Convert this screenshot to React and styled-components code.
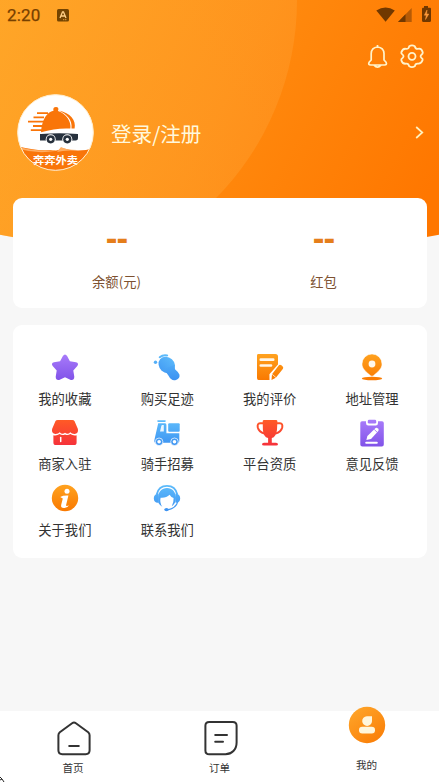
import React from 'react';
import styled, { createGlobalStyle } from 'styled-components';

const GlobalStyle = createGlobalStyle`
  * { box-sizing: border-box; }
  body {
    margin: 0;
    background: #f7f7f7;
    color: #333;
    font-family: "Noto Sans CJK SC", "Noto Sans", sans-serif;
  }
  svg { display: block; overflow: visible; }
`;

const Screen = styled.div`
  position: relative;
  display: flex;
  flex-direction: column;
  width: 439px;
  height: 782px;
  overflow: hidden;
  background: #f7f7f7;
`;

const Backdrop = styled.div`
  position: absolute;
  inset: 0 0 auto;
  height: 260px;
  overflow: hidden;
  background: linear-gradient(118deg, #ff9b18 0%, #ff8a0e 48%, #ff7700 92%);
  clip-path: circle(1147px at 50% -891px);

  &::before {
    content: '';
    position: absolute;
    left: -269px;
    top: -283px;
    width: 566px;
    height: 566px;
    border-radius: 50%;
    background: linear-gradient(90deg, rgba(255, 190, 75, 0.3) 48%, rgba(255, 205, 120, 0.14));
  }
`;

const StatusBar = styled.div`
  position: relative;
  display: flex;
  align-items: center;
  height: 30px;
  padding: 0 7px;
  color: #774000;
`;

const Clock = styled.span`
  width: 50px;
  font: 400 17px/30px Roboto, sans-serif;
  letter-spacing: 0.2px;
  -webkit-text-stroke: 0.25px currentColor;
`;

const StatusIcons = styled.div`
  margin-left: auto;
`;

const Actions = styled.div`
  position: relative;
  display: flex;
  justify-content: flex-end;
  gap: 11px;
  height: 64px;
  padding: 14px 15.5px 0 0;
`;

const Profile = styled.div`
  position: relative;
  display: flex;
  align-items: center;
  height: 77px;
  padding: 0 15px 0 17px;
`;

const LoginText = styled.span`
  margin: 0 0 0 17px;
  flex: 1;
  font-size: 20.6px;
  line-height: 30px;
  color: #fff8dc;
`;

const Card = styled.section`
  position: relative;
  margin: 0 12px 0 13px;
  border-radius: 9px;
  background: #fff;
`;

const BalanceCard = styled(Card)`
  display: grid;
  grid-template-columns: 1fr 1fr;
  height: 110px;
  margin-top: 27px;
`;

const Balance = styled.div`
  display: flex;
  flex-direction: column;
  align-items: center;
  padding-top: 25px;
`;

const Amount = styled.strong`
  height: 49px;
  font: 700 35px/30px "Liberation Sans", sans-serif;
  letter-spacing: -0.8px;
  color: #e57e1b;
`;

const BalanceLabel = styled.span`
  font-size: 13.3px;
  line-height: 20px;
  color: #7d5130;
`;

const MenuCard = styled(Card)`
  display: grid;
  grid-template-columns: repeat(4, 102.4px);
  grid-auto-rows: 65.6px;
  justify-content: start;
  height: 233px;
  margin-top: 17px;
  padding: 29px 0 0 0.7px;
`;

const MenuItem = styled.div`
  display: flex;
  flex-direction: column;
  align-items: center;
`;

const MenuLabel = styled.span`
  margin-top: 6.6px;
  font-size: 13.3px;
  line-height: 20px;
`;

const TabBar = styled.nav`
  position: relative;
  display: grid;
  grid-template-columns: 146px 147px 147px;
  height: 71px;
  margin-top: auto;
  background: #fff;
`;

const Tab = styled.div`
  display: flex;
  flex-direction: column;
  align-items: center;
  margin-top: ${(p) => (p.$raised ? '-5px' : '9px')};
`;

const TabIcon = styled.div`
  padding-left: ${(p) => (p.$raised ? '0' : '2px')};
`;

const TabLabel = styled.span`
  margin-top: ${(p) => (p.$raised ? '13px' : '3px')};
  font-size: 10.6px;
  line-height: 16px;
`;

const CursorMark = styled.div`
  position: absolute;
  left: 0;
  bottom: 0;
`;

const palettes = {
  purple: ['#a87bfa', '#8052e8'],
  blue: ['#5ebcfb', '#3a90f1'],
  orange: ['#ffa21f', '#f97800'],
  red: ['#ff5a26', '#f52f3c'],
};

function MenuIcon({ name, tone, children }) {
  const id = `fill-${name}`;
  return (
    <svg width="28" height="28" viewBox="0 0 28 28" fill={`url(#${id})`}>
      <defs>
        <linearGradient id={id} gradientUnits="userSpaceOnUse" x1="14" y1="0" x2="14" y2="27">
          <stop stopColor={palettes[tone][0]} />
          <stop offset="1" stopColor={palettes[tone][1]} />
        </linearGradient>
      </defs>
      {children(`url(#${id})`)}
    </svg>
  );
}

const menu = [
  { name: 'star', label: '我的收藏', tone: 'purple', draw: () => (
    <path d="M11.9 2Q14 -1 16.1 2L18.9 7.2L25 8.3Q28.3 9.3 26.3 12L22.3 16.4L23.3 22.8Q23.2 26.6 19.8 26L14 23.2L8.2 26Q4.8 26.6 4.7 22.8L5.7 16.4L1.7 12Q-.3 9.2 3 8.3L9.1 7.2Z" />
  ) },
  { name: 'steps', label: '购买足迹', tone: 'blue', draw: (fill) => (
    <>
      <ellipse cx="13.8" cy="11" rx="8.8" ry="7.6" transform="rotate(42 13.8 11)" />
      <path d="M8 16Q12.4 16.6 15.4 21.6Q18.5 27.6 23 26Q27.4 24.2 26.4 20.5Q25 17.5 22.2 15.4Q21 13.5 21 11Z" />
      <circle cx="2.5" cy="8.3" r="1.7" />
      <path d="M6.7 3.2Q10 .5 14.2 1.4" stroke={fill} strokeWidth="2" fill="none" strokeLinecap="round" />
    </>
  ) },
  { name: 'review', label: '我的评价', tone: 'orange', draw: () => (
    <>
      <path d="M2 0H19.5Q22 0 22 2.5V10.5L13.4 20.2L13.5 26H2.5Q1 26 1 24V1.5Q1 0 2 0Z" />
      <path d="M4.8 5.7H17.2M4.8 11.5H15" stroke="#fff6e8" strokeWidth="2.7" strokeLinecap="round" fill="none" />
      <path d="M22.7 11.5Q23.7 10 25.4 11.2L26.7 12.5Q27.8 13.6 26.8 15L19.8 23.8L15.5 26L16 20.2Z" />
      <path d="M16.2 20.3L20 23.6" stroke="#fff6e8" strokeWidth=".8" />
    </>
  ) },
  { name: 'address', label: '地址管理', tone: 'orange', draw: () => (
    <>
      <ellipse cx="14" cy="24.5" rx="10.2" ry="1.8" />
      <path d="M14 0A10 9.9 0 0 0 4 10C4 14.5 8 18 12.3 21.4Q14 23.2 15.7 21.4C20 18 24 14.5 24 10A10 9.9 0 0 0 14 0Z" stroke="#fff" strokeWidth=".5" />
      <circle cx="14" cy="10" r="3.4" fill="#fff8ec" />
    </>
  ) },
  { name: 'shop', label: '商家入驻', tone: 'red', draw: () => (
    <>
      <path d="M4.5 1Q5 0 6.8 0H21.2Q23 0 23.6 1.2L26.9 9Q27.7 13.8 23.6 13.9Q20.7 14 19.3 12.2Q16.8 15 14 12.7Q11.2 15 8.7 12.2Q7.3 14 4.4 13.9Q.3 13.5 1.1 9Z" />
      <path d="M2.4 15.3Q6 16 8.6 14Q11.4 16 14 14.4Q16.8 16 19.3 14Q22 16 25.6 15.3V22.4Q25.6 25 23 25H5Q2.4 25 2.4 22.4Z" />
      <path d="M9.7 17.5V21.4" stroke="#fff" strokeWidth="1.5" strokeLinecap="round" />
    </>
  ) },
  { name: 'rider', label: '骑手招募', tone: 'blue', draw: (fill) => (
    <>
      <rect x="4.2" y=".2" width="8.6" height="1.7" rx=".8" />
      <path d="M5.2 3.2H12.1Q13.4 3.2 13.4 5V13.2H26.3V21.3Q26.3 22.8 24.5 22.8H3Q.7 22.8 1.5 19.4Z" />
      <rect x="15.2" y="3.2" width="11.5" height="8.6" rx="1" />
      <circle cx="6.1" cy="21.8" r="3.8" fill={fill} stroke="#fff" strokeWidth=".7" />
      <circle cx="21.5" cy="21.8" r="3.8" fill={fill} stroke="#fff" strokeWidth=".7" />
      <circle cx="6.1" cy="21.8" r="1.8" fill="#fff" /><circle cx="21.5" cy="21.8" r="1.8" fill="#fff" />
      <path d="M7 11.5L8.3 6Q8.5 5 9.3 5H10.8V11.5Z" fill="#e9f6ff" />
    </>
  ) },
  { name: 'trophy', label: '平台资质', tone: 'red', draw: (fill) => (
    <>
      <path d="M6.7 1Q7 0 8 0H20Q21.3 0 21.4 1.2L21 9.7Q20.2 17 15.8 18V22.7H20Q22 22.8 22 24.2Q22 25.5 20.2 25.5H8Q6 25.5 6 24.2Q6 22.8 8 22.7H12.1V18Q7.2 17 6.9 9.7Z" />
      <path d="M7.6 3.3H4Q1 3.3 1.8 7.5Q2.8 11.8 8.6 13.6M20.4 3.3H24Q27 3.3 26.2 7.5Q25.2 11.8 19.4 13.6" stroke={fill} strokeWidth="2" fill="none" />
    </>
  ) },
  { name: 'feedback', label: '意见反馈', tone: 'purple', draw: () => (
    <>
      <path d="M4 1.3H8V3Q8 5.5 10.2 5.5H17.8Q20 5.5 20 3V1.3H24Q25.8 1.3 25.8 3V24.4Q25.8 26.4 23.8 26.4H4.4Q2.3 26.4 2.3 24.4V3Q2.3 1.3 4 1.3Z" />
      <rect x="9.8" y="-.2" width="8.4" height="3.8" rx="1.3" />
      <path d="M17.6 8.1Q18.6 7.2 20 8.5Q21.3 9.8 20.3 11.1L13 19.1L8.4 20L9.4 16Z" fill="#fff" />
      <path d="M16.2 9.4L19.2 12.3" stroke="#9868f2" strokeWidth=".8" />
      <path d="M8.2 22.7H18.8" stroke="#fff" strokeWidth="2" strokeLinecap="round" />
    </>
  ) },
  { name: 'about', label: '关于我们', tone: 'orange', draw: () => (
    <>
      <circle cx="14" cy="13" r="13.2" />
      <circle cx="16" cy="6.3" r="2.5" fill="#fff" />
      <path d="M9.2 11.9Q12.2 10.2 17.4 10.5L15 20.6Q15.7 21.3 18 20.3Q16.6 23.2 13 23Q9.4 22.9 10.2 19.7L11.8 13.4Z" fill="#fff" />
    </>
  ) },
  { name: 'support', label: '联系我们', tone: 'blue', draw: (fill) => (
    <>
      <path d="M3.7 9.5C5 3.6 9 .9 14 .9S23 3.6 24.3 9.5" stroke={fill} strokeWidth="1.8" fill="none" />
      <path d="M14 2.9C8.8 2.9 5.6 6.6 5.1 11.8L5.3 17.8Q7.2 21 9.3 21.7Q6.4 17.5 7.6 12.7Q13.2 13.2 16.6 9.7Q18.2 12.5 20.6 13Q20.8 17.5 18.8 21.2Q22.7 19 23 12.8C22.6 6.6 19.2 2.9 14 2.9Z" />
      <path d="M5.6 8.5V17.6Q.8 18 .8 13.2Q.8 9.3 5.6 8.5ZM22.4 8.5V17.6Q27.2 18 27.2 13.2Q27.2 9.3 22.4 8.5Z" />
      <path d="M24.8 16.7Q23 23.4 14.5 24.8" stroke={fill} strokeWidth="1.2" fill="none" />
      <ellipse cx="13.5" cy="24.6" rx="2.2" ry="1.6" />
    </>
  ) },
];

const Logo = () => (
  <svg width="77" height="77" viewBox="0 0 77 77">
    <defs><clipPath id="avatar"><circle cx="38.5" cy="38.5" r="38" /></clipPath></defs>
    <circle cx="38.5" cy="38.5" r="38" fill="#fff" />
    <g clipPath="url(#avatar)">
      <path d="M0 52Q17 57 34 56Q40 58 45 54Q61 59 77 54V77H0Z" fill="#f97509" />
      <path d="M0 52Q16 58 39 56L38 57Q20 60 2 55Z" fill="#ffad61" />
      <path d="M40 58L44 53Q49 56 60 56L46 57Z" fill="#ffad61" />
    </g>
    <path d="M24 38.2C25 25 30 18.2 36.5 16.8Q35.5 13 39 13Q42.4 13 41 17C49.5 20 54.4 27.6 53.4 34.5Q39 33.7 24 38.2Z" fill="#f97509" />
    <path d="M42.2 16.6C53 19 59.5 26.5 57.6 34.5H54.5C55.5 26 50 20.8 42.2 16.6Z" fill="#f97509" />
    <path d="M20 19.2H31M16.5 23.4H27M11 27.7H27M16 32H25M13.8 36.2H25" stroke="#f97509" strokeWidth="1.8" />
    <path d="M24 40Q42 38.5 61 40V44.2Q61 46.5 58.7 46.5H23V40Z" fill="#27313d" />
    {[33.7, 50.3].map((x) => (
      <g key={x}>
        <circle cx={x} cy="45.3" r="5" fill="#fff" />
        <circle cx={x} cy="45.3" r="4.1" fill="#27313d" />
        <circle cx={x} cy="45.3" r="1.6" fill="#fff" />
      </g>
    ))}
    <text x="38.5" y="70" textAnchor="middle" fontSize="10" fontWeight="700" fill="#fff" textLength="45" lengthAdjust="spacingAndGlyphs">奔奔外卖</text>
    <circle cx="38.5" cy="38.5" r="37.8" fill="none" stroke="#ffedcd" strokeWidth="1" />
  </svg>
);

const NoticeBadge = () => (
  <svg width="12" height="13" viewBox="0 0 12 13">
    <rect width="12" height="12.6" rx="1.6" fill="#744400" />
    <path d="M3 9L5.5 3H6.5L9 9M4 7H8" fill="none" stroke="#ffcf85" strokeWidth="1.3" />
    <path d="M6 10.7H10" stroke="#ffb14a" strokeWidth=".8" strokeDasharray="1.2 .6" />
  </svg>
);

const PhoneStatus = () => (
  <svg width="56" height="17" viewBox="0 0 56 17">
    <path d="M.3 3.5Q9.6-2.3 18.8 3.5L9.6 14.7Z" fill="#713800" />
    <path d="M22 15L35.7 1V15Z" fill="#b65a05" />
    <path d="M22 15L29.5 7.2V15Z" fill="#713800" />
    <path d="M46 .8H48V-1H52V.8H54Q55 .8 55 2V13.6Q55 14.9 54 14.9H47Q46 14.9 46 13.6V2Q46 .8 47 .8Z" fill="#713800" />
    <path d="M51 3L48.3 8.2H50.3L49.5 12.5L52.8 7H50.7Z" fill="#ff9b3a" stroke="#ff9b3a" strokeWidth=".5" />
  </svg>
);

const Bell = () => (
  <svg width="22" height="25" viewBox="0 0 22 25" fill="none" stroke="#fff3cb" strokeWidth="1.7" strokeLinejoin="round">
    <path d="M10.5 1V3M4.2 16V9.5Q4.5 3.5 10.5 3Q16.7 3.5 17 9.5V16L19.1 18.3Q20.3 20.9 17.5 21H3.7Q.8 20.9 2.1 18.3ZM7 21.2Q10.5 25 14 21.2" />
  </svg>
);

const Gear = () => (
  <svg width="24" height="25" viewBox="0 0 24 25" fill="none" stroke="#fff3cb" strokeWidth="1.8" strokeLinejoin="round">
    <path d="M9.2 2.2Q12 .6 14.8 2.2Q15.5 5.3 18.1 4.8Q21.6 4.1 22.8 8.4Q23 9.7 21.3 10.9Q19.9 12.2 21.3 13.7Q23.2 14.9 22.6 16.2Q21.1 20 18.1 19.7Q15.3 19.3 14.8 22.3Q12 23.9 9.2 22.3Q8.5 19.2 5.9 19.7Q2.4 20.1 1.3 16.2Q.9 14.9 2.8 13.7Q4.2 12.2 2.8 10.9Q.9 9.5 1.3 8.4Q2.7 4.3 5.9 4.8Q8.8 5.3 9.2 2.2Z" />
    <circle cx="12" cy="12.3" r="3.5" />
  </svg>
);

const Chevron = () => (
  <svg width="9" height="13" viewBox="0 0 9 13">
    <path d="M1.2 1L7.3 6.5L1.2 12" fill="none" stroke="#fff1bf" strokeWidth="1.7" />
  </svg>
);

const HomeIcon = () => (
  <svg width="34" height="37" viewBox="0 0 34 37" fill="none" stroke="#333" strokeWidth="2" strokeLinejoin="round" strokeLinecap="round">
    <path d="M15.1 3.2Q17 1.8 18.9 3.2L31.2 12.3Q32.6 13.5 32.6 15.3V30.3Q32.6 34.2 28.7 34.2H5.3Q1.4 34.2 1.4 30.3V15.3Q1.4 13.5 2.8 12.3ZM12.2 26H21.8" />
  </svg>
);

const OrderIcon = () => (
  <svg width="34" height="37" viewBox="0 0 34 37" fill="none" stroke="#333" strokeWidth="2" strokeLinejoin="round" strokeLinecap="round">
    <path d="M5.2 2H28.8Q32.6 2 32.6 5.8V22.5C32.6 29.5 27.8 34.2 21.5 34.2H5.2Q1.4 34.2 1.4 30.4V5.8Q1.4 2 5.2 2ZM11.2 15H23M11.2 21.8H19" />
  </svg>
);

const MineIcon = () => (
  <svg width="38" height="38" viewBox="0 0 38 38">
    <defs><linearGradient id="mine" x2=".7" y2="1"><stop stopColor="#ffa82c" /><stop offset="1" stopColor="#fa8009" /></linearGradient></defs>
    <circle cx="19" cy="19" r="18.2" fill="url(#mine)" />
    <path d="M24 10.2V15.2A4.9 4.9 0 1 1 18.8 10.2Z" fill="#fff6dc" />
    <rect x="11" y="20.8" width="16" height="6.7" rx="3.3" fill="#fff6dc" />
  </svg>
);

export default function App() {
  return (
    <Screen>
      <GlobalStyle />
      <Backdrop />
      <StatusBar>
        <Clock>2:20</Clock>
        <NoticeBadge />
        <StatusIcons><PhoneStatus /></StatusIcons>
      </StatusBar>
      <Actions><Bell /><Gear /></Actions>
      <Profile>
        <Logo />
        <LoginText>登录/注册</LoginText>
        <Chevron />
      </Profile>
      <BalanceCard>
        {['余额(元)', '红包'].map((label) => (
          <Balance key={label}>
            <Amount>--</Amount>
            <BalanceLabel>{label}</BalanceLabel>
          </Balance>
        ))}
      </BalanceCard>
      <MenuCard>
        {menu.map(({ name, label, tone, draw }) => (
          <MenuItem key={name}>
            <MenuIcon name={name} tone={tone}>{draw}</MenuIcon>
            <MenuLabel>{label}</MenuLabel>
          </MenuItem>
        ))}
      </MenuCard>
      <TabBar>
        <Tab><TabIcon><HomeIcon /></TabIcon><TabLabel>首页</TabLabel></Tab>
        <Tab><TabIcon><OrderIcon /></TabIcon><TabLabel>订单</TabLabel></Tab>
        <Tab $raised><TabIcon $raised><MineIcon /></TabIcon><TabLabel $raised>我的</TabLabel></Tab>
      </TabBar>
      <CursorMark>
        <svg width="5" height="5" viewBox="0 0 5 5"><path d="M0 0L2 2M0 3L2 2L4 5" stroke="#222" fill="none" /></svg>
      </CursorMark>
    </Screen>
  );
}
